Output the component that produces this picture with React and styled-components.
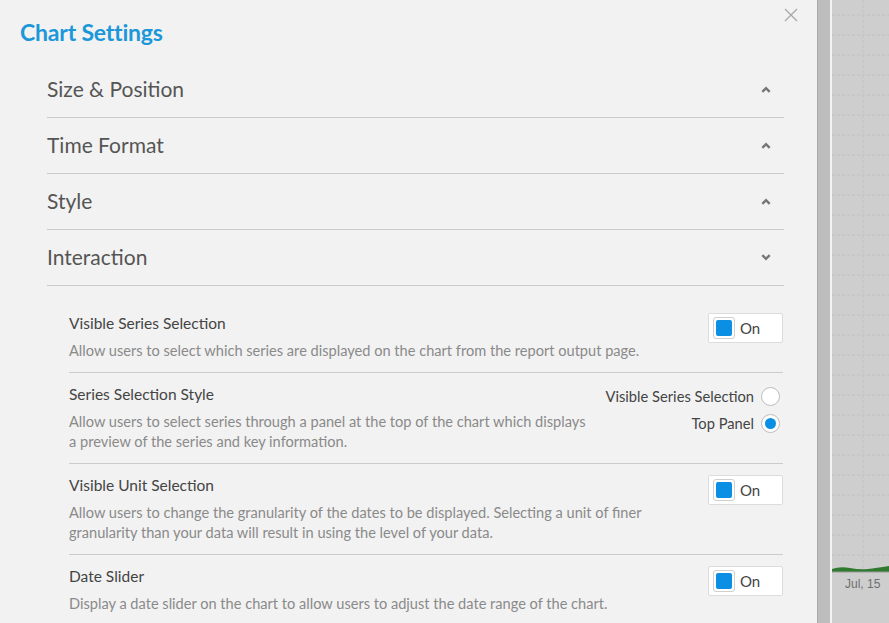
import React from 'react';
import styled, { createGlobalStyle } from 'styled-components';

const Global = createGlobalStyle`
  html, body { margin: 0; padding: 0; }
  body {
    font-family: Lato, "Open Sans", sans-serif;
    background: #f2f2f2;
    overflow: hidden;
  }
`;

const Page = styled.div`
  display: flex;
  height: 623px;
  width: 889px;
  overflow: hidden;
`;

const Panel = styled.div`
  position: relative;
  flex: none;
  width: 818px;
  box-sizing: border-box;
  background: #f2f2f2;
  border-right: 1px solid #a9a9a9;
`;

const Strip = styled.div`
  width: 12px;
  flex: none;
  background: #bdbdbd;
  border-right: 2px solid #f4f4f4;
`;

const Chart = styled.div`
  flex: 1;
  position: relative;
  background: #cecece;
`;

const Title = styled.h1`
  margin: 0;
  height: 62px;
  padding-left: 20px;
  box-sizing: border-box;
  padding-top: 17px;
  font-size: 23px;
  font-weight: 700;
  color: #1c97d9;
  line-height: 30px;
  letter-spacing: -0.2px;
`;

const Close = styled.button`
  position: absolute;
  top: 8px;
  right: 18px;
  width: 16px;
  height: 16px;
  padding: 0;
  border: 0;
  background: none;
  cursor: pointer;
`;

const Accordion = styled.div`
  margin-left: 47px;
  width: 737px;
`;

const Header = styled.div`
  display: flex;
  align-items: center;
  justify-content: space-between;
  height: 55px;
  box-sizing: content-box;
  border-bottom: 1px solid #cbcbcb;
  font-size: 21px;
  color: #555;
  padding-right: 13px;
  line-height: 26px;
  & > span { margin-top: -2px; }
`;

const Body = styled.div`
  padding: 16px 1px 0 22px;
`;

const Item = styled.div`
  display: flex;
  justify-content: space-between;
  padding: 11px 0 12px;
  border-bottom: ${p => (p.$last ? 'none' : '1px solid #cbcbcb')};
`;

const Text = styled.div`
  max-width: 600px;
`;

const ItemTitle = styled.div`
  font-size: 15.5px;
  line-height: 20px;
  color: #444;
  margin-bottom: 7px;
`;

const Desc = styled.div`
  font-size: 14.6px;
  line-height: 20px;
  color: #8a8a8a;
  padding-top: 1px;
  margin-bottom: -1px;
`;

const Toggle = styled.div`
  width: 75px;
  height: 30px;
  box-sizing: border-box;
  background: #fff;
  border: 1px solid #dcdcdc;
  border-radius: 2px;
  display: flex;
  align-items: center;
  gap: 5px;
  padding-left: 4px;
  font-size: 15px;
  color: #444;
  flex: none;
`;

const Knob = styled.span`
  width: 22px;
  height: 22px;
  box-sizing: border-box;
  border: 1px solid #cfcfcf;
  border-radius: 3px;
  padding: 2px;
  background: #fff;
  display: flex;
  span {
    flex: 1;
    background: #0a8fe4;
    border-radius: 2px;
  }
`;

const Radios = styled.div`
  display: flex;
  flex-direction: column;
  align-items: flex-end;
  gap: 7px;
  padding-right: 3px;
  margin-top: 2px;
`;

const RadioRow = styled.label`
  display: flex;
  align-items: center;
  gap: 7px;
  font-size: 14.7px;
  line-height: 20px;
  color: #444;
`;

const Radio = styled.span`
  width: 19px;
  height: 19px;
  box-sizing: border-box;
  border-radius: 50%;
  border: 1px solid #bdbdbd;
  background: #fff;
  display: flex;
  align-items: center;
  justify-content: center;
  &::after {
    content: '';
    width: 11px;
    height: 11px;
    border-radius: 50%;
    background: ${p => (p.$on ? '#0a8fe4' : 'transparent')};
  }
`;

const DateLabel = styled.div`
  position: absolute;
  left: 13px;
  top: 577px;
  font-size: 12px;
  color: #6e6e6e;
  font-family: "Liberation Sans", Arial, sans-serif;
`;

const Chevron = ({ up }) => (
  <svg width="10" height="7" viewBox="0 0 10 7">
    <polyline
      points={up ? '1.3,5.8 5,2.2 8.7,5.8' : '1.3,1.2 5,4.8 8.7,1.2'}
      fill="none"
      stroke="#767676"
      strokeWidth="2.4"
    />
  </svg>
);

const Switch = () => (
  <Toggle>
    <Knob><span /></Knob>
    On
  </Toggle>
);

const sections = ['Size & Position', 'Time Format', 'Style'];

function ChartGrid() {
  const rows = [];
  for (let y = 15; y < 570; y += 20) rows.push(y);
  return (
    <svg width="57" height="623" style={{ position: 'absolute', left: 0, top: 0 }}>
      {rows.map(y => (
        <line key={y} x1="0" x2="57" y1={y} y2={y} stroke="#c0c0c0" strokeDasharray="3 2" />
      ))}
      <line x1="31" x2="31" y1="0" y2="575" stroke="#c2c2c2" strokeDasharray="3 2" />
      <path d="M0 569 Q8 566 18 568 T36 569 T57 566 L57 572 L0 572 Z" fill="#2f7a2f" />
      <line x1="0" x2="57" y1="572" y2="572" stroke="#9a9a9a" />
    </svg>
  );
}

export default function App() {
  return (
    <Page>
      <Global />
      <Panel>
        <Title>Chart Settings</Title>
        <Close aria-label="close">
          <svg width="14" height="14" viewBox="0 0 14 14">
            <path d="M1 1 L13 13 M13 1 L1 13" stroke="#a8a8a8" strokeWidth="1.3" />
          </svg>
        </Close>
        <Accordion>
          {sections.map(s => (
            <Header key={s}>
              <span>{s}</span>
              <Chevron up />
            </Header>
          ))}
          <Header>
            <span>Interaction</span>
            <Chevron />
          </Header>
          <Body>
            <Item>
              <Text>
                <ItemTitle>Visible Series Selection</ItemTitle>
                <Desc>Allow users to select which series are displayed on the chart from the report output page.</Desc>
              </Text>
              <Switch />
            </Item>
            <Item>
              <Text>
                <ItemTitle>Series Selection Style</ItemTitle>
                <Desc>
                  Allow users to select series through a panel at the top of the chart which displays
                  <br />a preview of the series and key information.
                </Desc>
              </Text>
              <Radios>
                <RadioRow>Visible Series Selection <Radio /></RadioRow>
                <RadioRow>Top Panel <Radio $on /></RadioRow>
              </Radios>
            </Item>
            <Item>
              <Text>
                <ItemTitle>Visible Unit Selection</ItemTitle>
                <Desc>
                  Allow users to change the granularity of the dates to be displayed. Selecting a unit of finer
                  <br />granularity than your data will result in using the level of your data.
                </Desc>
              </Text>
              <Switch />
            </Item>
            <Item $last>
              <Text>
                <ItemTitle>Date Slider</ItemTitle>
                <Desc>Display a date slider on the chart to allow users to adjust the date range of the chart.</Desc>
              </Text>
              <Switch />
            </Item>
          </Body>
        </Accordion>
      </Panel>
      <Strip />
      <Chart>
        <ChartGrid />
        <DateLabel>Jul, 15</DateLabel>
      </Chart>
    </Page>
  );
}
